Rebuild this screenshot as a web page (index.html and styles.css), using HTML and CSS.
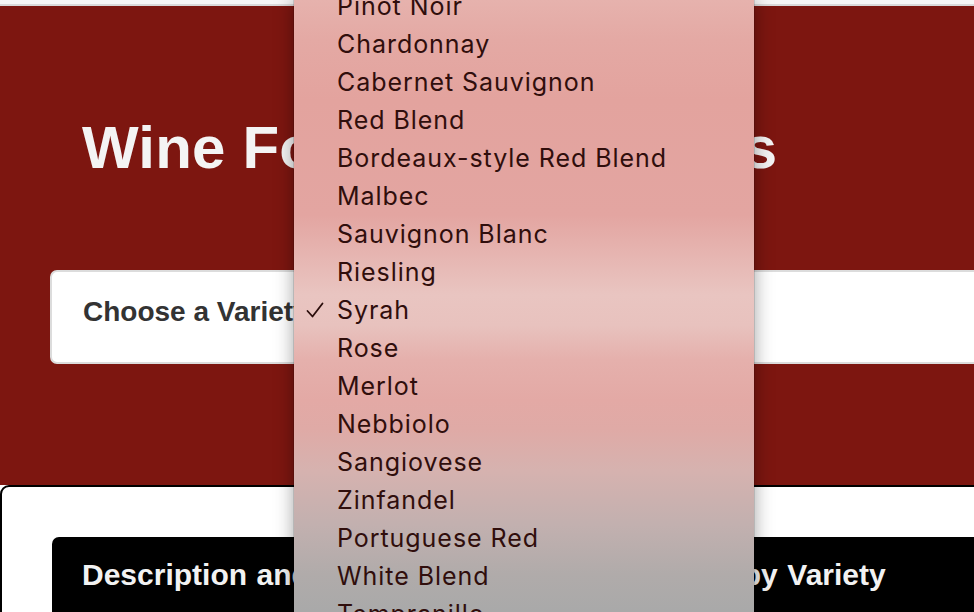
FILE: index.html
```html
<!DOCTYPE html>
<html lang="en">
<head>
<meta charset="utf-8">
<title>Wine Forecast Analytics</title>
<link rel="stylesheet" href="styles.css">
</head>
<body>
<div class="topbar"></div>
<div class="page">
  <header class="hero">
    <h1 class="hero-title">Wine Forecast Analytics</h1>
    <div class="chooser">
      <span class="chooser-label">Choose a Variety</span>
    </div>
  </header>
  <section class="card">
    <div class="card-head">Description and Reviewer Ratings and Prices by Variety</div>
  </section>
</div>

<div class="menu">
  <ul class="menu-list">
    <li class="menu-item"><span class="menu-check"></span><span>Pinot Noir</span></li>
    <li class="menu-item"><span class="menu-check"></span><span>Chardonnay</span></li>
    <li class="menu-item"><span class="menu-check"></span><span>Cabernet Sauvignon</span></li>
    <li class="menu-item"><span class="menu-check"></span><span>Red Blend</span></li>
    <li class="menu-item"><span class="menu-check"></span><span>Bordeaux-style Red Blend</span></li>
    <li class="menu-item"><span class="menu-check"></span><span>Malbec</span></li>
    <li class="menu-item"><span class="menu-check"></span><span>Sauvignon Blanc</span></li>
    <li class="menu-item"><span class="menu-check"></span><span>Riesling</span></li>
    <li class="menu-item"><span class="menu-check"><svg class="check-icon" width="18" height="16" viewBox="0 0 18 16"><path d="M1.5 9 L6.5 14.5 L16.5 1.5" fill="none" stroke="currentColor" stroke-width="1.8" stroke-linecap="round" stroke-linejoin="round"/></svg></span><span>Syrah</span></li>
    <li class="menu-item"><span class="menu-check"></span><span>Rose</span></li>
    <li class="menu-item"><span class="menu-check"></span><span>Merlot</span></li>
    <li class="menu-item"><span class="menu-check"></span><span>Nebbiolo</span></li>
    <li class="menu-item"><span class="menu-check"></span><span>Sangiovese</span></li>
    <li class="menu-item"><span class="menu-check"></span><span>Zinfandel</span></li>
    <li class="menu-item"><span class="menu-check"></span><span>Portuguese Red</span></li>
    <li class="menu-item"><span class="menu-check"></span><span>White Blend</span></li>
    <li class="menu-item"><span class="menu-check"></span><span>Tempranillo</span></li>
    <li class="menu-item"><span class="menu-check"></span><span>Sparkling Blend</span></li>
  </ul>
</div>
</body>
</html>
```

FILE: styles.css
```css
html, body {
  margin: 0;
  padding: 0;
  overflow: hidden;
  background: #ffffff;
  font-family: "Liberation Sans", Arial, Helvetica, sans-serif;
}

.topbar {
  height: 4px;
  background: #f6f6f6;
  border-bottom: 2px solid #dadada;
}

.page {
  width: 1100px;
}

.hero {
  background: #7d1610;
  padding: 106px 50px 121px 50px;
}

.hero-title {
  margin: 0 0 86px 32px;
  font-size: 60px;
  line-height: 72px;
  font-weight: 700;
  color: #f4f4f4;
  letter-spacing: 0.2px;
}

.chooser {
  background: #ffffff;
  border: 2px solid #dcdcdc;
  border-radius: 7px;
  padding: 23px 31px 33px 31px;
}

.chooser-label {
  font-size: 28px;
  line-height: 33.6px;
  font-weight: 700;
  color: #333333;
}

.card {
  background: #ffffff;
  border: 2px solid #000000;
  border-radius: 9px 9px 0 0;
  padding: 50px 50px 60px 50px;
}

.card-head {
  background: #000000;
  color: #f2f2f2;
  border-radius: 7px;
  font-size: 30px;
  line-height: 36px;
  font-weight: 700;
  word-spacing: 1.2px;
  padding: 20px 30px 26px 30px;
}

.menu {
  position: absolute;
  left: 294px;
  top: 0;
  width: 460px;
  height: 640px;
  overflow: hidden;
  background: linear-gradient(to bottom,
    #e6b2ad 0px,
    #e4a9a4 40px,
    #e3a39e 100px,
    #e3a5a1 215px,
    #e6b5b1 255px,
    #e9c5c1 295px,
    #e8c2be 325px,
    #e5b0ac 360px,
    #e3a9a5 400px,
    #dfaaa6 430px,
    #d6b2af 470px,
    #c2b0af 525px,
    #b0abaa 575px,
    #a9a9a9 612px);
  box-shadow: 0 0 18px rgba(0, 0, 0, 0.38), 0 0 0 1px rgba(0, 0, 0, 0.12);
  color: #300e0c;
}

.menu-list {
  list-style: none;
  margin: -13px 0 0 0;
  padding: 0;
  font-family: Inter, "Noto Sans", sans-serif;
  font-size: 25px;
  letter-spacing: 0.95px;
  line-height: 38px;
}

.menu-item {
  display: flex;
  align-items: center;
  height: 38px;
}

.menu-check {
  width: 43px;
  flex: none;
  display: flex;
  align-items: center;
  padding-left: 12px;
  box-sizing: border-box;
}

.check-icon {
  display: block;
  color: #2a0d0b;
}
```
